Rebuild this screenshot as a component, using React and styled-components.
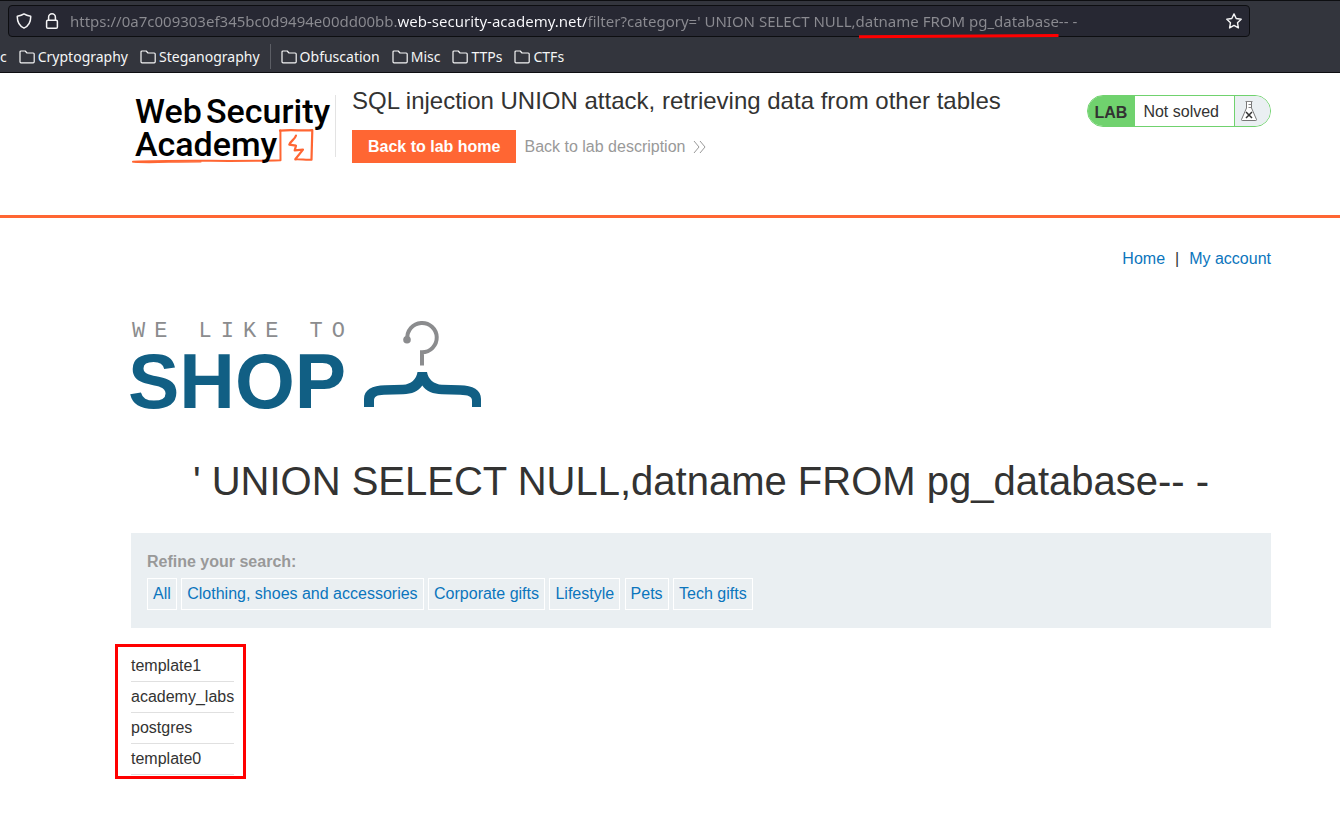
import React from "react";
import styled, { createGlobalStyle } from "styled-components";

const GlobalStyle = createGlobalStyle`
  *, *::before, *::after { box-sizing: border-box; }
  body {
    margin: 0;
    background: #fff;
    color: #333332;
    font: 16px/18px "Liberation Sans", Arial, sans-serif;
    overflow-x: hidden;
  }
  h1, h2, p, ul { margin: 0; padding: 0; font-weight: 400; }
  ul { list-style: none; }
  a { text-decoration: none; }
`;

/* Browser chrome */

const Chrome = styled.header`
  background: #33353d;
  border-top: 1px solid #0d0e11;
  border-bottom: 1px solid #0d0e11;
  padding-top: 4px;
  color: #f5f5f6;
  font-family: "Noto Sans", sans-serif;
`;

const AddressBar = styled.div`
  position: relative;
  display: flex;
  align-items: center;
  height: 32px;
  margin: 0 90px 0 8px;
  padding: 0 7px;
  background: #272833;
  border: 1px solid #0d0e11;
  border-radius: 4px;
`;

const IconButton = styled.button`
  display: flex;
  flex: none;
  width: 16px;
  height: 16px;
  margin-right: ${(p) => p.$gap || 0}px;
  padding: 0;
  border: 0;
  background: none;
  color: inherit;
`;

const UrlInput = styled.input`
  flex: 1;
  min-width: 0;
  height: 24px;
  padding: 0;
  border: 0;
  outline: 0;
  font: 15px/24px "Noto Sans", sans-serif;
  background: linear-gradient(90deg, #8b8b91 328px, #fbfbfe 328px 516px, #8b8b91 516px);
  background-clip: text;
  -webkit-background-clip: text;
  -webkit-text-fill-color: transparent;
`;

const UrlUnderline = styled.svg`
  position: absolute;
  left: 849px;
  top: 27px;
`;

const Bookmarks = styled.nav`
  display: flex;
  align-items: center;
  gap: 12px;
  height: 35px;
  padding-top: 4px;
  overflow: hidden;
`;

const Bookmark = styled.button`
  display: flex;
  align-items: center;
  gap: 3px;
  padding: 0;
  border: 0;
  background: none;
  color: inherit;
  font: 14px/20px "Noto Sans", sans-serif;
`;

const BookmarkDivider = styled.span`
  width: 1px;
  height: 25px;
  margin: 0 -2px;
  background: #5c5e65;
`;

/* Lab banner */

const Banner = styled.section`
  display: flex;
  align-items: flex-start;
  min-height: 145px;
  padding: 14px 69px 0 131px;
  border-bottom: 3px solid #ff6633;
`;

const LogoLink = styled.a`
  display: block;
  flex: none;
  width: 205px;
  height: 62px;
  margin-top: 8px;
  border-right: 1px solid #e3e3e3;
  svg { display: block; overflow: visible; }
`;

const BannerText = styled.div`
  flex: 1;
  padding-left: 16px;
`;

const LabTitle = styled.h2`
  font-size: 24px;
  line-height: 28px;
`;

const BannerActions = styled.div`
  display: flex;
  align-items: center;
  gap: 8px;
  margin-top: 15px;
`;

const HomeButton = styled.a`
  padding: 0 16px;
  background: #ff6633;
  color: #fff;
  font-weight: 700;
  line-height: 33px;
`;

const DescriptionLink = styled.a`
  display: flex;
  align-items: center;
  gap: 8px;
  color: #999;
`;

const Status = styled.div`
  display: flex;
  flex: none;
  height: 32px;
  margin-top: 8px;
  border: 1px solid #70d26e;
  border-radius: 16px;
  overflow: hidden;
  line-height: 32px;
`;

const StatusTag = styled.span`
  padding: 1px 8px 0 7px;
  background: #70d26e;
  font-weight: 700;
`;

const StatusText = styled.p`
  padding: 0 15px 0 8px;
  line-height: 31px;
`;

const StatusIcon = styled.span`
  display: flex;
  align-items: center;
  width: 36px;
  padding-left: 5px;
  border-left: 1px solid #70d26e;
  background: #eaeff2;
`;

/* Shop page */

const Shop = styled.main`
  padding: 32px 69px 40px 131px;
`;

const AccountNav = styled.nav`
  display: flex;
  justify-content: flex-end;
  gap: 10px;
  a { color: #0b75bd; }
`;

const ShopLogo = styled.svg`
  display: block;
  margin-top: 47px;
  overflow: visible;
`;

const PageTitle = styled.h1`
  margin-top: 48px;
  font-size: 40px;
  line-height: 48px;
  text-align: center;
`;

const Filters = styled.section`
  margin-top: 28px;
  padding: 20px 16px 18px;
  background: #eaeff2;
`;

const FilterLabel = styled.p`
  margin-bottom: 7px;
  color: #999;
  font-weight: 700;
`;

const FilterLink = styled.a`
  display: inline-block;
  padding: 0 5px;
  border: 1px solid #fff;
  color: #0b75bd;
  line-height: 30px;
`;

const FilterRow = styled.div`
  line-height: 32px;
`;

const Results = styled.div`
  position: relative;
  width: fit-content;
  margin-top: 23px;
`;

const Highlight = styled.div`
  position: absolute;
  inset: -7px -12px -4px -16px;
  border: 3px solid #ff0000;
`;

const ResultTable = styled.table`
  border-collapse: separate;
  border-spacing: 0;
  th {
    padding: 6px 0;
    border-bottom: 1px solid #e0e0e0;
    font-weight: 400;
    text-align: left;
  }
`;

const line = { fill: "none", stroke: "currentColor", strokeLinejoin: "round", strokeLinecap: "round" };

const Shield = () => (
  <svg width="16" height="16" viewBox="0 0 16 16" {...line} strokeWidth="1.5">
    <path d="M8 .9 C6.3 2.2 3.8 2.9 1.3 3.2 C1.1 8.4 3 12.7 8 15.1 C13 12.7 14.9 8.4 14.7 3.2 C12.2 2.9 9.7 2.2 8 .9Z" />
  </svg>
);

const Lock = () => (
  <svg width="16" height="16" viewBox="0 0 16 16" {...line} strokeWidth="1.5">
    <rect x="2.6" y="7.3" width="10.8" height="7.9" rx="1.3" />
    <path d="M4.6 7V4.2a3.4 3.4 0 0 1 6.8 0V7" />
  </svg>
);

const Star = () => (
  <svg width="16" height="16" viewBox="0 0 16 16" {...line} strokeWidth="1.4">
    <path d="M8 .9 10.2 5.5 15.2 6.2 11.5 9.7 12.4 14.9 8 12.4 3.6 14.9 4.5 9.7 .8 6.2 5.8 5.5Z" />
  </svg>
);

const Folder = () => (
  <svg width="16" height="16" viewBox="0 0 16 16" {...line} strokeWidth="1.2">
    <path d="M1 12.8V3a1 1 0 0 1 1-1h4.2l1.8 2h6.2a1 1 0 0 1 1 1v7.8a1 1 0 0 1-1 1H2a1 1 0 0 1-1-1Z" />
  </svg>
);

const AcademyLogo = () => (
  <svg width="204" height="72" viewBox="0 0 204 72" role="img" aria-label="Web Security Academy">
    <g fill="none" stroke="#ff6633" strokeLinecap="round" strokeLinejoin="round">
      <path d="M2 66.800C50 64.600 98 66.900 149.500 65.300L149.400 35.500" strokeWidth="2" />
      <path d="M4 67.200C20 68.300 40 66.800 70 66.800" strokeWidth="1.200" />
      <path d="M149 35.700C160 34.400 170 36 181.300 35.200L180.500 64.600C175 65.200 170 63.900 164.300 64.300L172 54.600 163.700 55.300 165 50.700 158.300 49.600C159.500 46 164 44.500 165 40.500" strokeWidth="2.200" />
    </g>
    <g fill="#000" fontFamily="Roboto, sans-serif" fontSize="34" fontWeight="500">
      <text x="4" y="28">Web</text>
      <text x="75" y="28">Security</text>
      <text x="4" y="61">Academy</text>
    </g>
  </svg>
);

const Flask = () => (
  <svg width="18" height="22" viewBox="0 0 18 22" fill="none">
    <path d="M6.500 1.500V8L1.500 19.500a.7.7 0 0 0 .7 1h13.600a.7.7 0 0 0 .7-1L11.500 8V1.500" fill="#fff" stroke="#777" />
    <path d="M5.500 1.500h7M8.500 4.500h3M8.500 7.500h3" stroke="#888" />
    <path d="m6 12 6 6m0-6-6 6" stroke="#333" strokeWidth="1.5" />
  </svg>
);

const bookmarks = ["Cryptography", "Steganography", null, "Obfuscation", "Misc", "TTPs", "CTFs"];
const categories = ["All", "Clothing, shoes and accessories", "Corporate gifts", "Lifestyle", "Pets", "Tech gifts"];
const databases = ["template1", "academy_labs", "postgres", "template0"];
const url =
  "https://0a7c009303ef345bc0d9494e00dd00bb.web-security-academy.net/filter?category=' UNION SELECT NULL,datname FROM pg_database-- -";

export default function App() {
  return (
    <>
      <GlobalStyle />
      <Chrome>
        <AddressBar>
          <IconButton aria-label="Tracking protection" $gap={12}><Shield /></IconButton>
          <IconButton aria-label="Site information" $gap={10}><Lock /></IconButton>
          <UrlInput aria-label="Address" defaultValue={url} spellCheck={false} />
          <IconButton aria-label="Bookmark this page"><Star /></IconButton>
          <UrlUnderline width="202" height="6" viewBox="0 0 202 6">
            <path d="M1 3.700 200.500 2.500" stroke="#ff0000" strokeWidth="3" />
          </UrlUnderline>
        </AddressBar>
        <Bookmarks aria-label="Bookmarks">
          <Bookmark>c</Bookmark>
          {bookmarks.map((name, i) =>
            name ? (
              <Bookmark key={name}><Folder />{name}</Bookmark>
            ) : (
              <BookmarkDivider key={i} />
            )
          )}
        </Bookmarks>
      </Chrome>

      <Banner>
        <LogoLink href="#academy"><AcademyLogo /></LogoLink>
        <BannerText>
          <LabTitle>SQL injection UNION attack, retrieving data from other tables</LabTitle>
          <BannerActions>
            <HomeButton href="#lab">Back to lab home</HomeButton>
            <DescriptionLink href="#description">
              Back to lab description
              <svg width="13" height="14" viewBox="0 0 13 14" fill="none" stroke="#999">
                <path d="m1 1 5 6-5 6M7 1l5 6-5 6" />
              </svg>
            </DescriptionLink>
          </BannerActions>
        </BannerText>
        <Status>
          <StatusTag>LAB</StatusTag>
          <StatusText>Not solved</StatusText>
          <StatusIcon><Flask /></StatusIcon>
        </Status>
      </Banner>

      <Shop>
        <AccountNav>
          <a href="#home">Home</a>
          <span>|</span>
          <a href="#account">My account</a>
        </AccountNav>
        <ShopLogo width="352" height="94" viewBox="0 0 352 94" role="img" aria-label="We like to shop">
          <text x="1" y="22" fill="#8b8c8e" fontFamily="Liberation Mono, monospace" fontSize="22" letterSpacing="9">WE LIKE TO</text>
          <text x="-3" y="93" fill="#115f84" fontFamily="Liberation Sans, sans-serif" fontWeight="700" fontSize="77">SHOP</text>
          <path d="M276.400 24A14.700 14.700 0 1 1 291 37.300V50.500" fill="none" stroke="#8b8c8e" strokeWidth="4" />
          <circle cx="276" cy="24.700" r="3.800" fill="#8b8c8e" />
          <path
            transform="translate(0 2)"
            fill="#115f84"
            d="M286.500 55H296C297 62 303 67.500 311 67.700L329 68.300C342 68.500 350 73 350 82V90H341V84C341 79 337 78 329 77.700L311 77.200C302 77 295 74.500 291.300 68.500C287.500 74.500 281 77 272 77.200L253 77.700C246 78 243 79 243 84V90H233V82C233 73 241 68.500 254 68.300L272 67.700C280 67.500 285.500 62 286.500 55Z"
          />
        </ShopLogo>

        <PageTitle>' UNION SELECT NULL,datname FROM pg_database-- -</PageTitle>

        <Filters>
          <FilterLabel>Refine your search:</FilterLabel>
          <FilterRow>
            {categories.map((name) => (
              <React.Fragment key={name}>
                <FilterLink href={"#" + name.split(/[ ,]/)[0].toLowerCase()}>{name}</FilterLink>{" "}
              </React.Fragment>
            ))}
          </FilterRow>
        </Filters>

        <Results>
          <ResultTable>
            <tbody>
              {databases.map((name) => (
                <tr key={name}><th scope="row">{name}</th></tr>
              ))}
            </tbody>
          </ResultTable>
          <Highlight />
        </Results>
      </Shop>
    </>
  );
}
